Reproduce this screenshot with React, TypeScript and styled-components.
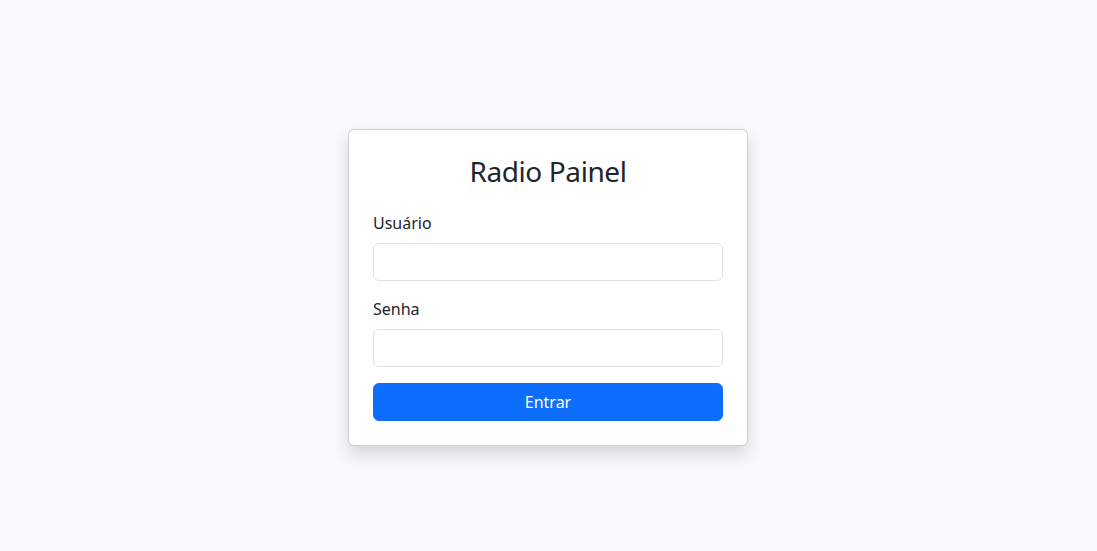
import React from "react";
import styled, { createGlobalStyle } from "styled-components";

const Global = createGlobalStyle`
  * { box-sizing: border-box; }
  html, body { margin: 0; padding: 0; }
  body {
    background: #f8f9fa;
    color: #212529;
    font-family: "Noto Sans", "Open Sans", sans-serif;
    font-size: 16px;
    line-height: 1.5;
  }
`;

const Page = styled.div`
  min-height: 100vh;
  padding: 24px 1px 0 0;
  display: flex;
  align-items: center;
  justify-content: center;
`;

const Card = styled.form`
  width: 400px;
  background: #fff;
  border: 1px solid rgba(0, 0, 0, 0.175);
  border-radius: 6px;
  box-shadow: 0 8px 16px rgba(0, 0, 0, 0.15);
  padding: 24px;
  display: flex;
  flex-direction: column;
`;

const Title = styled.h3`
  margin: 0 0 24px;
  padding-top: 1px;
  font-size: 28px;
  font-weight: 400;
  line-height: 32.6px;
  letter-spacing: -0.4px;
  text-align: center;
  color: #212529;
`;

const Field = styled.div`
  display: flex;
  flex-direction: column;
  margin-bottom: 16px;
`;

const Label = styled.label`
  margin-bottom: 8px;
  padding-top: 1px;
  font-size: 16px;
  line-height: 23px;
`;

const Input = styled.input`
  height: 38px;
  padding: 6px 12px;
  font: inherit;
  border: 1px solid #dee2e6;
  border-radius: 6px;
  background: #fff;
  outline: none;
`;

const Button = styled.button`
  height: 38px;
  border: 1px solid #0d6efd;
  border-radius: 6px;
  background: #0d6efd;
  color: #fff;
  font: inherit;
  padding-top: 1px;
  cursor: pointer;
`;

export default function App() {
  return (
    <>
      <Global />
      <Page>
        <Card onSubmit={(e) => e.preventDefault()}>
          <Title>Radio Painel</Title>
          <Field>
            <Label htmlFor="user">Usuário</Label>
            <Input id="user" type="text" />
          </Field>
          <Field>
            <Label htmlFor="pass">Senha</Label>
            <Input id="pass" type="password" />
          </Field>
          <Button type="submit">Entrar</Button>
        </Card>
      </Page>
    </>
  );
}
